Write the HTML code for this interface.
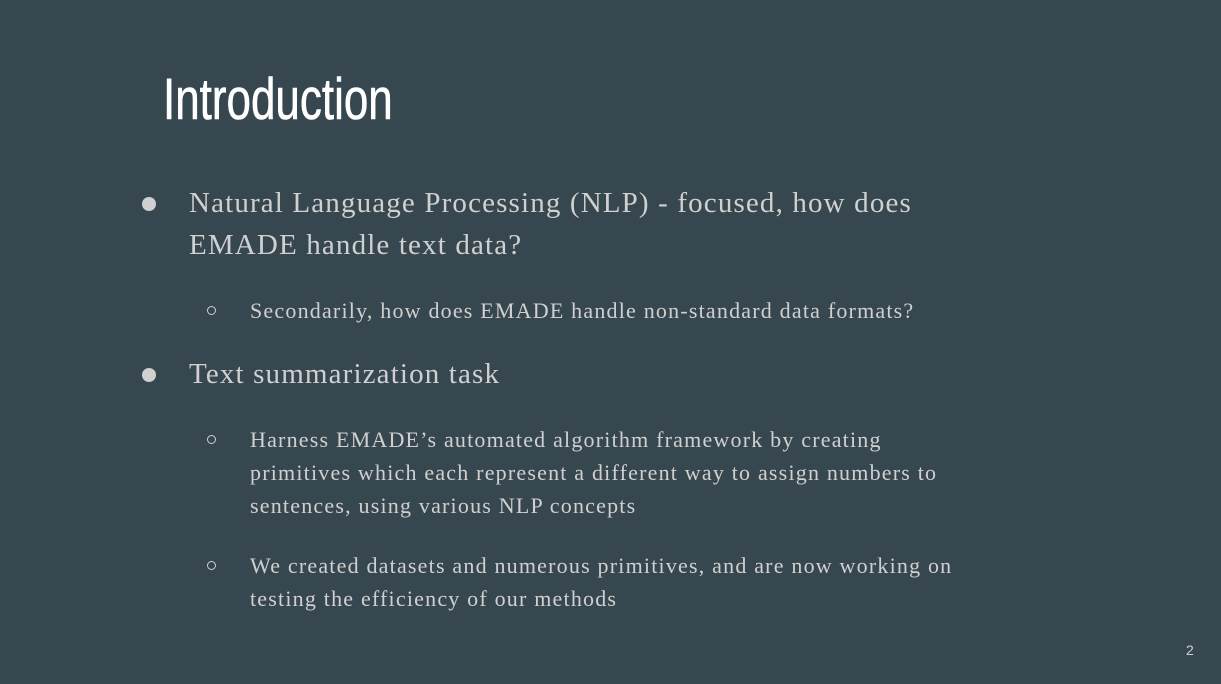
<!DOCTYPE html>
<html><head><meta charset="utf-8"><style>
html,body{margin:0;padding:0}
body{width:1221px;height:684px;background:#37474f;position:relative;overflow:hidden;font-family:"Liberation Serif",serif;color:#d0d0d0}
.t{position:absolute;left:163px;top:60px;font-family:"Liberation Sans",sans-serif;color:#fff;font-size:58px;line-height:80px;transform:scaleX(0.758);transform-origin:left top;white-space:nowrap;-webkit-text-stroke:0.6px #fff}
.p{position:absolute;white-space:nowrap}
.l1{font-size:29px;line-height:42px;left:189px;letter-spacing:1.15px}
.l2{font-size:22px;line-height:33px;left:250px;letter-spacing:1.2px}
.b1{position:absolute;left:142px;width:14px;height:14px;border-radius:50%;background:#d0d0d0}
.b2{position:absolute;left:207px;width:9px;height:9px;border-radius:50%;border:1.5px solid #d0d0d0;box-sizing:border-box}
.n{position:absolute;left:1186px;top:642px;font-family:"Liberation Sans",sans-serif;font-size:14px;color:#d0d0d0}
</style></head><body>
<div class="t">Introduction</div>
<div class="b1" style="top:197px"></div>
<div class="p l1" style="top:182px">Natural Language Processing (NLP) - focused, how does<br>EMADE handle text data?</div>
<div class="b2" style="top:306px"></div>
<div class="p l2" style="top:294px">Secondarily, how does EMADE handle non-standard data formats?</div>
<div class="b1" style="top:368px"></div>
<div class="p l1" style="top:353px">Text summarization task</div>
<div class="b2" style="top:435px"></div>
<div class="p l2" style="top:423px">Harness EMADE’s automated algorithm framework by creating<br>primitives which each represent a different way to assign numbers to<br>sentences, using various NLP concepts</div>
<div class="b2" style="top:561px"></div>
<div class="p l2" style="top:549px">We created datasets and numerous primitives, and are now working on<br>testing the efficiency of our methods</div>
<div class="n">2</div>
</body></html>
